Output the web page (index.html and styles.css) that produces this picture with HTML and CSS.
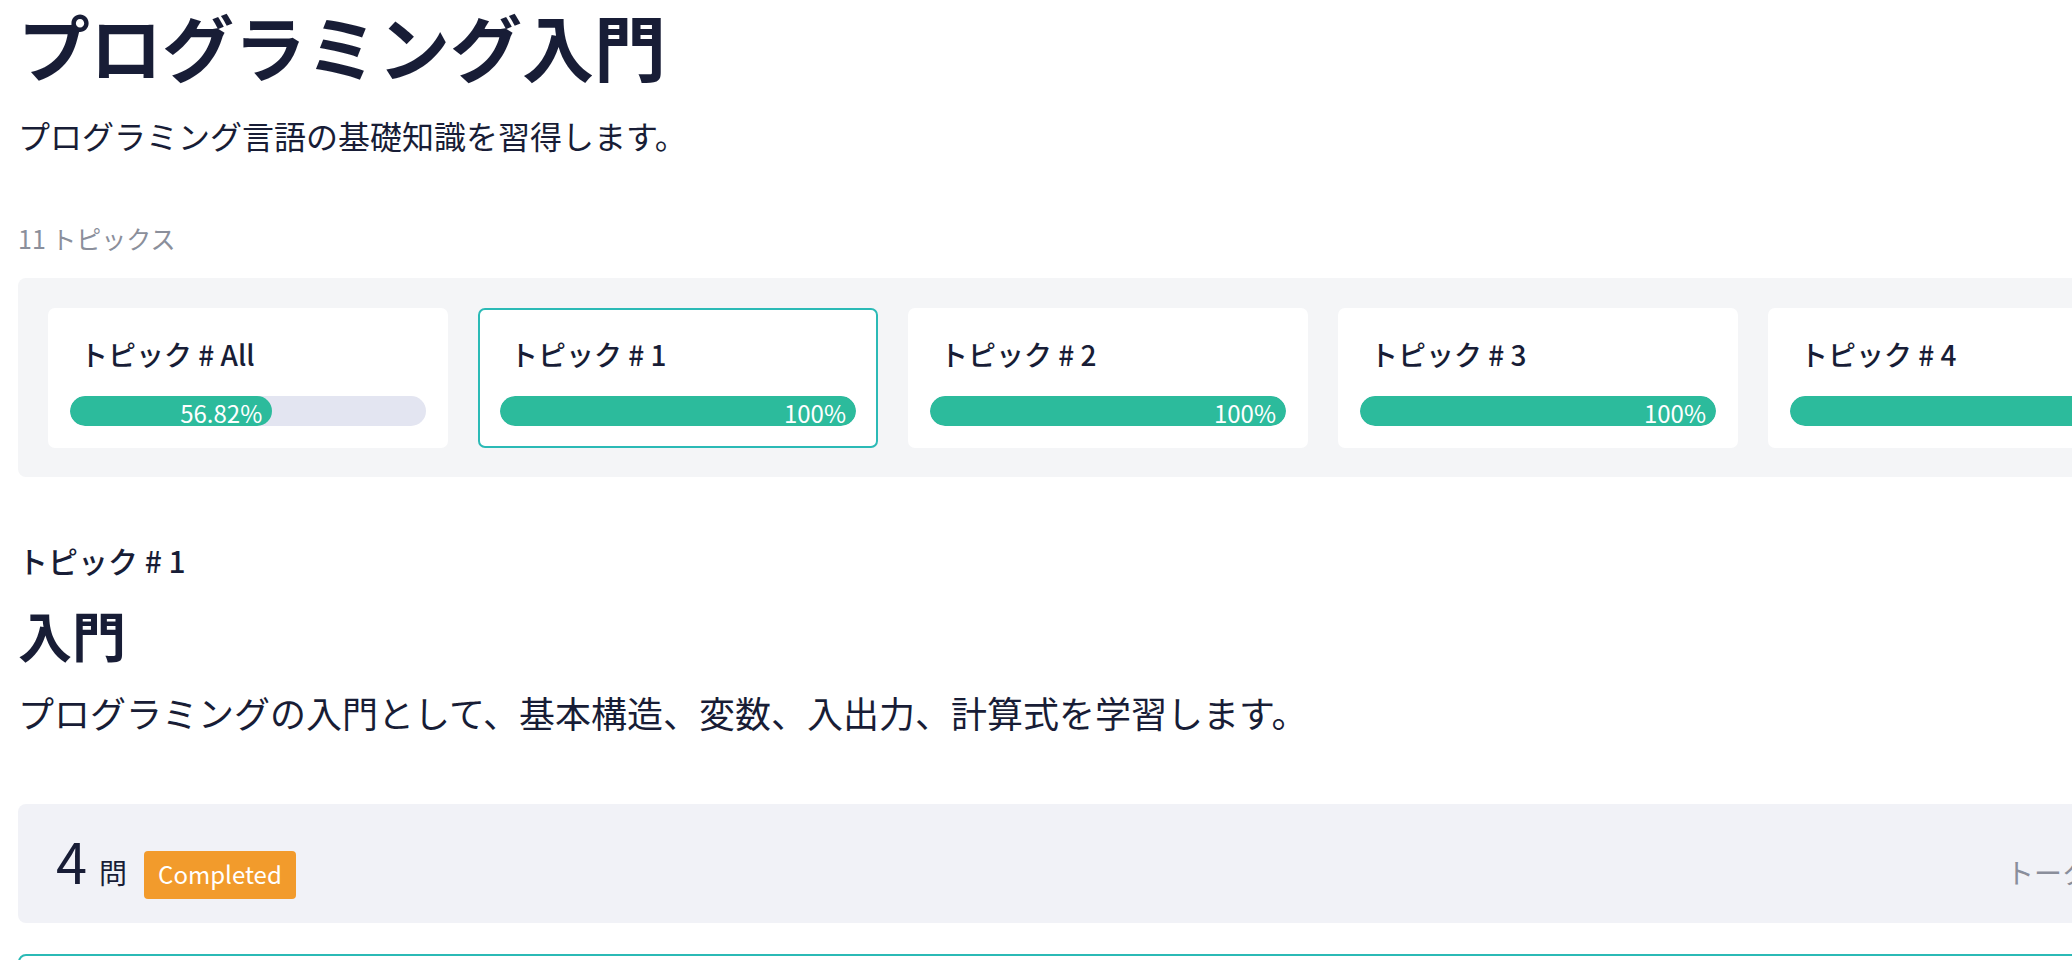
FILE: index.html
```html
<!DOCTYPE html>
<html lang="ja">
<head>
<meta charset="utf-8">
<title>プログラミング入門</title>
<link rel="stylesheet" href="styles.css">
</head>
<body>
<div class="page">
  <header class="course-head">
    <h1 class="course-title">プログラミング入門</h1>
    <p class="course-desc">プログラミング言語の基礎知識を習得します。</p>
  </header>

  <p class="topic-count">11 トピックス</p>

  <div class="topic-strip">
    <div class="topic-card">
      <div class="topic-name">トピック # All</div>
      <div class="bar"><div class="bar-fill" style="width:56.82%"><span class="bar-text">56.82%</span></div></div>
    </div>
    <div class="topic-card is-active">
      <div class="topic-name">トピック # 1</div>
      <div class="bar"><div class="bar-fill" style="width:100%"><span class="bar-text">100%</span></div></div>
    </div>
    <div class="topic-card">
      <div class="topic-name">トピック # 2</div>
      <div class="bar"><div class="bar-fill" style="width:100%"><span class="bar-text">100%</span></div></div>
    </div>
    <div class="topic-card">
      <div class="topic-name">トピック # 3</div>
      <div class="bar"><div class="bar-fill" style="width:100%"><span class="bar-text">100%</span></div></div>
    </div>
    <div class="topic-card">
      <div class="topic-name">トピック # 4</div>
      <div class="bar"><div class="bar-fill" style="width:100%"><span class="bar-text">100%</span></div></div>
    </div>
    <div class="topic-card">
      <div class="topic-name">トピック # 5</div>
      <div class="bar"><div class="bar-fill" style="width:50%"><span class="bar-text">50%</span></div></div>
    </div>
  </div>

  <section class="topic-detail">
    <div class="topic-label">トピック # 1</div>
    <h2 class="topic-title">入門</h2>
    <p class="topic-desc">プログラミングの入門として、基本構造、変数、入出力、計算式を学習します。</p>
  </section>

  <div class="summary">
    <span class="q-count">4</span>
    <span class="q-unit">問</span>
    <span class="badge">Completed</span>
    <span class="summary-right">トータル正答率</span>
  </div>

  <div class="question-card"></div>
</div>
</body>
</html>
```

FILE: styles.css
```css
html, body {
  margin: 0;
  padding: 0;
  background: #ffffff;
  overflow: hidden;
}

body {
  font-family: "Noto Sans CJK JP", "Noto Sans", sans-serif;
  color: #181d36;
}

.page {
  padding: 0 0 0 18px;
}

.course-title {
  margin: 0;
  font-size: 72px;
  line-height: 90px;
  font-weight: 700;
}

.course-desc {
  margin: 21px 0 0;
  font-size: 32px;
  line-height: 48px;
  font-weight: 400;
}

.topic-count {
  margin: 61px 0 0;
  font-size: 25px;
  line-height: 36px;
  color: #8b8f9b;
}

.topic-strip {
  box-sizing: border-box;
  width: 2222px;
  margin-top: 22px;
  background: #f4f5f7;
  border-radius: 8px;
  padding: 30px 30px 29px 30px;
  display: flex;
  gap: 30px;
  overflow: hidden;
}

.topic-card {
  flex: 0 0 400px;
  box-sizing: border-box;
  background: #ffffff;
  border: 2px solid #ffffff;
  border-radius: 7px;
  padding: 20px;
}

.topic-card.is-active {
  border-color: #2bbab6;
}

.topic-name {
  margin-top: 4px;
  padding-left: 10px;
  font-size: 28px;
  line-height: 40px;
  font-weight: 500;
}

.bar {
  margin-top: 22px;
  height: 30px;
  border-radius: 15px;
  background: #e3e5f1;
  overflow: hidden;
}

.bar-fill {
  height: 30px;
  border-radius: 15px;
  background: #2cbb9c;
  overflow: hidden;
  display: flex;
  justify-content: flex-end;
  align-items: flex-end;
}

.bar-text {
  padding-right: 10px;
  font-size: 24px;
  line-height: 26px;
  color: #ffffff;
}

.topic-label {
  margin-top: 62px;
  font-size: 30px;
  line-height: 42px;
  font-weight: 500;
}

.topic-title {
  margin: 18px 0 0;
  font-size: 54px;
  line-height: 72px;
  font-weight: 700;
}

.topic-desc {
  margin: 14px 0 0;
  font-size: 36px;
  line-height: 54px;
}

.summary {
  box-sizing: border-box;
  width: 2222px;
  margin-top: 65px;
  background: #f1f2f7;
  border-radius: 8px;
  padding: 29px 38px 24px 38px;
  display: flex;
  align-items: baseline;
}

.q-count {
  font-size: 56px;
  line-height: 54px;
}

.q-unit {
  margin-left: 12px;
  font-size: 28px;
  line-height: 40px;
}

.badge {
  margin-left: 17px;
  background: #f29b2c;
  color: #ffffff;
  border-radius: 4px;
  padding: 7px 14px 9px;
  font-size: 24px;
  line-height: 32px;
}

.summary-right {
  margin-left: auto;
  font-size: 28px;
  line-height: 40px;
  color: #8a8e9b;
}

.question-card {
  box-sizing: border-box;
  width: 2222px;
  margin-top: 31px;
  height: 300px;
  border: 2px solid #2bbab6;
  border-radius: 8px;
}
```
